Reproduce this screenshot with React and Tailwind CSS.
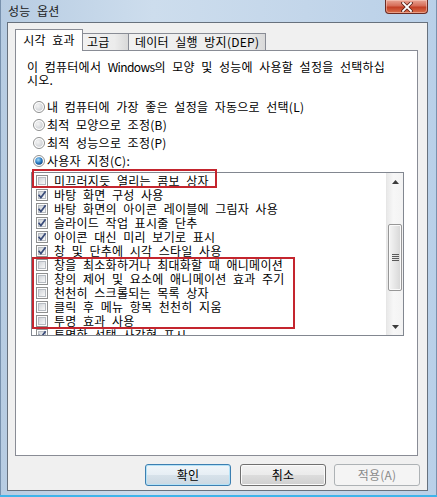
import React from "react";

function CheckBox({ checked }) {
  return (
    <svg width="12" height="12" viewBox="0 0 12 12" className="shrink-0">
      <defs>
        <linearGradient id="cbg" x1="0" y1="0" x2="1" y2="1">
          <stop offset="0" stopColor="#cdd1d6" />
          <stop offset="1" stopColor="#fbfbfb" />
        </linearGradient>
      </defs>
      <rect x="0.5" y="0.5" width="11" height="11" fill="#fdfdfd" stroke="#8e8f8f" />
      <rect x="2.5" y="2.5" width="7" height="7" fill="url(#cbg)" stroke="#b7bcc2" />
      {checked && (
        <path d="M2.6 5.8 L4.9 8.6 L9.6 2.2" stroke="#3a4c7a" strokeWidth="1.7" fill="none" />
      )}
    </svg>
  );
}

function Radio({ checked }) {
  return (
    <svg width="12" height="12" viewBox="0 0 12 12" className="shrink-0">
      <defs>
        <radialGradient id="rg" cx="0.35" cy="0.35" r="0.8">
          <stop offset="0" stopColor="#f4f4f4" />
          <stop offset="1" stopColor="#c9ccd1" />
        </radialGradient>
        <radialGradient id="rb" cx="0.4" cy="0.35" r="0.7">
          <stop offset="0" stopColor="#a6dcf8" />
          <stop offset="0.6" stopColor="#2a7bc2" />
          <stop offset="1" stopColor="#0c3f7a" />
        </radialGradient>
      </defs>
      <circle cx="6" cy="6" r="5.5" fill="#ffffff" stroke="#8e8f8f" />
      <circle cx="6" cy="6" r="3.8" fill={checked ? "url(#rb)" : "url(#rg)"} />
    </svg>
  );
}

const items = [
  ["미끄러지듯 열리는 콤보 상자", false],
  ["바탕 화면 구성 사용", true],
  ["바탕 화면의 아이콘 레이블에 그림자 사용", true],
  ["슬라이드 작업 표시줄 단추", true],
  ["아이콘 대신 미리 보기로 표시", true],
  ["창 및 단추에 시각 스타일 사용", true],
  ["창을 최소화하거나 최대화할 때 애니메이션", false],
  ["창의 제어 및 요소에 애니메이션 효과 주기", false],
  ["천천히 스크롤되는 목록 상자", false],
  ["클릭 후 메뉴 항목 천천히 지움", false],
  ["투명 효과 사용", false],
  ["투명한 선택 사각형 표시", true],
];

const radios = [
  ["내 컴퓨터에 가장 좋은 설정을 자동으로 선택(L)", false],
  ["최적 모양으로 조정(B)", false],
  ["최적 성능으로 조정(P)", false],
  ["사용자 지정(C):", true],
];

export default function App() {
  return (
    <div className="w-[437px] h-[497px] flex flex-col overflow-hidden bg-[linear-gradient(90deg,#b7cce2,#cddded_35%,#c3d6ea_70%,#b9d0e8)] shadow-[inset_1px_0_0_#7891ad,inset_-1px_0_0_#7891ad] font-['Noto_Sans_CJK_KR','Noto_Sans',sans-serif] text-[12px] text-black tracking-[0.25px] [word-spacing:3.5px]">
      {/* title bar */}
      <div className="h-[22px] shrink-0 flex items-start justify-between pl-[8px] pr-[9px]">
        <span className="mt-[4px] leading-[14px] text-[#1b1b1b]">성능 옵션</span>
        <div className="w-[43px] h-[14px] rounded-b-[4px] border border-t-0 border-[#6a2b24] bg-[linear-gradient(#e9a494,#d66d58_45%,#c33f26_55%,#d9714c)] shadow-[inset_0_0_0_1px_rgba(255,220,210,0.45)] flex items-center justify-center">
          <svg width="12" height="10" viewBox="0 0 12 10">
            <path d="M2 1 L10 9 M10 1 L2 9" stroke="#5b2219" strokeWidth="3.4" strokeLinecap="square" />
            <path d="M2 1 L10 9 M10 1 L2 9" stroke="#ffffff" strokeWidth="1.8" strokeLinecap="square" />
          </svg>
        </div>
      </div>

      {/* client area */}
      <div className="ml-[7px] w-[421px] h-[469px] shrink-0 border border-[#67717d] bg-[#f0f0f0] flex flex-col pt-[6px] pl-[7px]">
        {/* tabs */}
        <div className="h-[21px] flex items-end">
          <div className="relative z-10 w-[68px] h-[22px] -mb-[1px] bg-white border border-b-0 border-[#898c95] flex items-center justify-center leading-[14px] pb-[1px]">
            시각 효과
          </div>
          <div className="w-[46px] h-[17px] border border-l-0 border-b-0 border-[#898c95] bg-[linear-gradient(90deg,#f1f1f1,#ececec_70%,#d9d9d9)] flex items-center pl-[4px] leading-[14px]">
            고급
          </div>
          <div className="w-[137px] h-[17px] border border-l-0 border-b-0 border-[#898c95] bg-[linear-gradient(90deg,#f1f1f1,#ececec_85%,#d9d9d9)] flex items-center pl-[6px] leading-[14px] whitespace-nowrap">
            데이터 실행 방지(DEP)
          </div>
        </div>

        {/* panel */}
        <div className="w-[403px] h-[406px] border border-[#898c95] bg-white pt-[9px] pl-[11px] flex flex-col">
          <p className="leading-[13px] whitespace-nowrap">
            이 컴퓨터에서 <span className="tracking-[-0.6px]">Windows</span>의 모양 및 성능에 사용할 설정을 선택하십
            <br />
            시오.
          </p>
          <div className="mt-[12px] flex flex-col">
            {radios.map(([t, c]) => (
              <div key={t} className="h-[18px] flex items-center pl-[6px] gap-[2px]">
                <Radio checked={c} />
                <span className="leading-[14px] whitespace-nowrap">{t}</span>
              </div>
            ))}
          </div>

          {/* listbox */}
          <div className="relative mt-[2px] ml-[4px] w-[373px] h-[164px]">
            <div className="w-full h-full border border-[#828790] bg-white flex">
              <div className="flex-1 overflow-hidden pt-[1px]">
                {items.map(([t, c]) => (
                  <div key={t} className="h-[14px] flex items-center pl-[4px] gap-[6px]">
                    <CheckBox checked={c} />
                    <span className="leading-[14px] whitespace-nowrap">{t}</span>
                  </div>
                ))}
              </div>
              {/* scrollbar */}
              <div className="w-[17px] flex flex-col bg-[linear-gradient(90deg,#e9e9e9,#f7f7f7_40%,#f3f3f3)] border-l border-[#e6e6e6]">
                <div className="h-[17px] flex items-center justify-center">
                  <svg width="7" height="4" viewBox="0 0 7 4">
                    <path d="M0 4 L3.5 0 L7 4 Z" fill="#3c3c3c" />
                  </svg>
                </div>
                <div className="flex-1 flex flex-col">
                  <div className="h-[34px]" />
                  <div className="mx-[1px] h-[67px] rounded-[2px] border border-[#979797] bg-[linear-gradient(90deg,#f5f5f5,#e6e6e6_50%,#d6d6d6)] shadow-[inset_0_0_0_1px_#fafafa] flex flex-col items-center justify-center gap-[1px]">
                    <div className="w-[7px] h-[1px] bg-[#5a5a5a]" />
                    <div className="w-[7px] h-[1px] bg-[#5a5a5a]" />
                    <div className="w-[7px] h-[1px] bg-[#5a5a5a]" />
                    <div className="w-[7px] h-[1px] bg-[#5a5a5a]" />
                  </div>
                </div>
                <div className="h-[17px] flex items-center justify-center">
                  <svg width="7" height="4" viewBox="0 0 7 4">
                    <path d="M0 0 L3.5 4 L7 0 Z" fill="#3c3c3c" />
                  </svg>
                </div>
              </div>
            </div>
            {/* red annotation boxes */}
            <div className="absolute left-[1px] top-[-3px] w-[185px] h-[19px] border-2 border-[#c4252e]" />
            <div className="absolute left-[1px] top-[85px] w-[263px] h-[72px] border-2 border-[#c4252e]" />
          </div>
        </div>

        {/* buttons */}
        <div className="mt-[8px] flex justify-end gap-[8px] pr-[7px]">
          <div className="mr-[1px] w-[86px] h-[22px] rounded-[3px] border border-[#3c7fb1] bg-[linear-gradient(#f0f6fa,#e6eef4_50%,#d7e2ea_50%,#cbd8e2)] shadow-[inset_0_0_0_1px_#b4e2f7] flex items-center justify-center leading-[14px]">
            확인
          </div>
          <div className="w-[86px] h-[22px] rounded-[3px] border border-[#707070] bg-[linear-gradient(#f2f2f2,#ebebeb_50%,#dddddd_50%,#cfcfcf)] shadow-[inset_0_0_0_1px_#fbfbfb] flex items-center justify-center leading-[14px]">
            취소
          </div>
          <div className="w-[86px] h-[22px] rounded-[3px] border border-[#adb2b5] bg-[#f4f4f4] flex items-center justify-center leading-[14px] text-[#8a8a8a]">
            적용(A)
          </div>
        </div>
      </div>

      {/* bottom frame */}
      <div className="flex-1 border-b-2 border-[#3fb4ea]" />
    </div>
  );
}
